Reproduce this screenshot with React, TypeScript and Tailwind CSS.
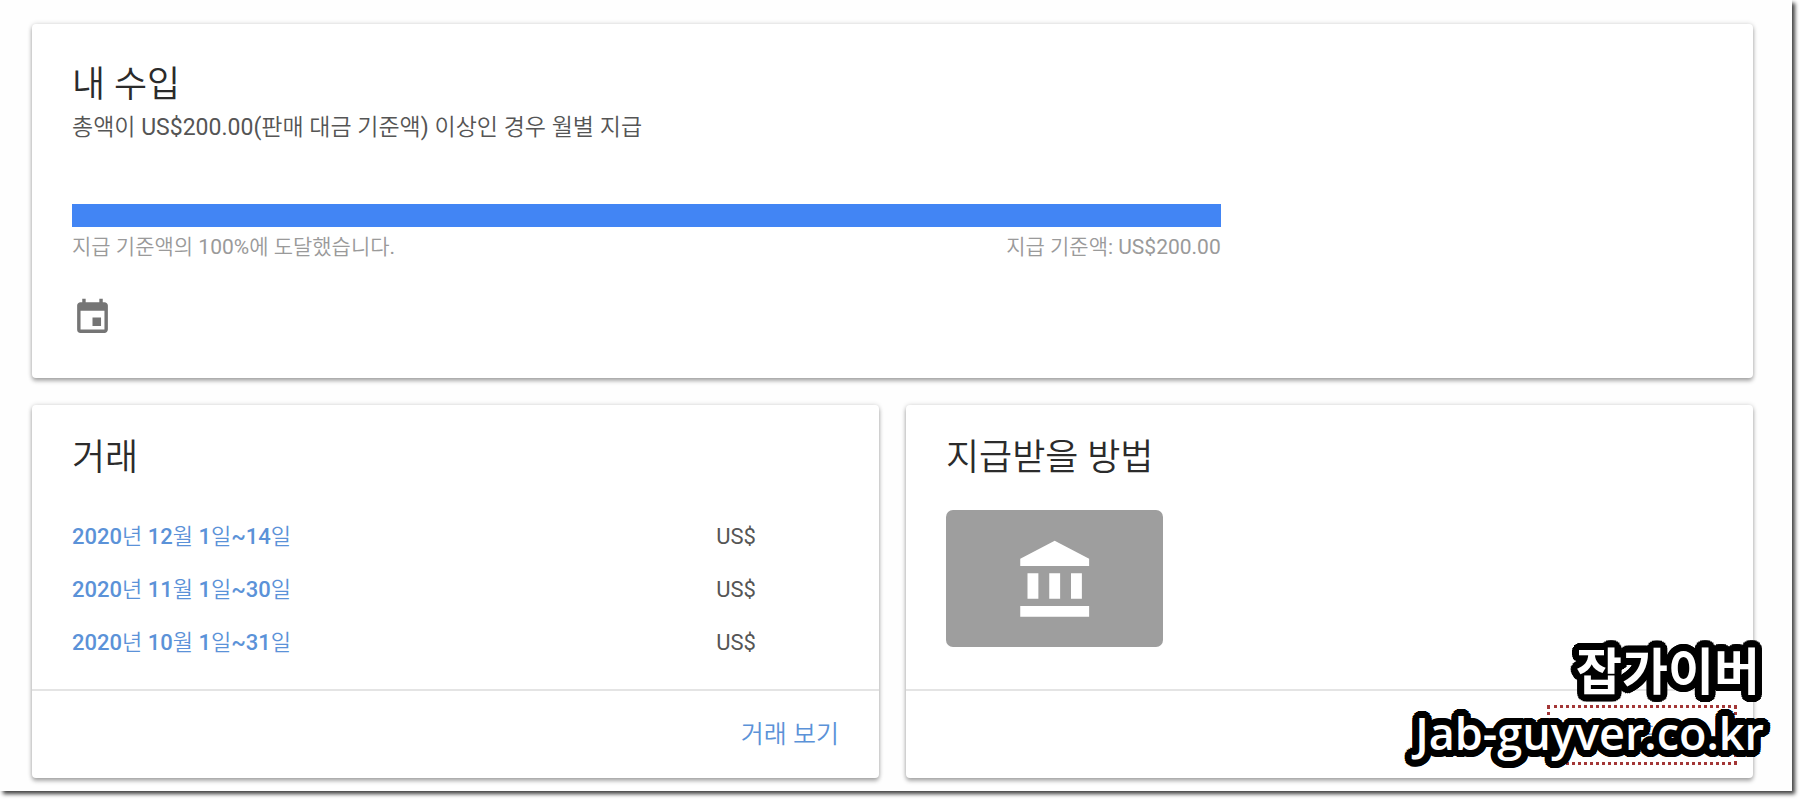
import type { ReactNode } from 'react';
import { MdEvent } from 'react-icons/md';

interface Transaction {
  period: string;
  amount: string;
}

const TRANSACTIONS: Transaction[] = [
  { period: '2020년 12월 1일~14일', amount: 'US$' },
  { period: '2020년 11월 1일~30일', amount: 'US$' },
  { period: '2020년 10월 1일~31일', amount: 'US$' },
];

const PROGRESS = 100;

// Round outline: copies of the text on two rings around it
const OUTLINE = [7, 4]
  .flatMap(radius =>
    Array.from({ length: 24 }, (_, i) => {
      const angle = (i * Math.PI) / 12;
      return `${(Math.cos(angle) * radius).toFixed(1)}px ${(Math.sin(angle) * radius).toFixed(1)}px 0 #000`;
    })
  )
  .join(', ');

function BankIcon() {
  return (
    <svg viewBox="0 0 24 24" fill="currentColor" aria-hidden="true" className="size-[87px] text-white">
      <path d="M4 10v7h3v-7H4zm6 0v7h3v-7h-3zM2 22h19v-3H2v3zm14-12v7h3v-7h-3zm-4.5-9L2 6v2h19V6l-9.5-5z" />
    </svg>
  );
}

function Card({ children }: { children: ReactNode }) {
  return (
    <section className="flex min-w-0 flex-1 flex-col rounded bg-white shadow-[0_3px_4px_rgba(0,0,0,0.3),0_0_5px_rgba(0,0,0,0.16)]">
      {children}
    </section>
  );
}

function CardTitle({ children }: { children: ReactNode }) {
  return <h2 className="text-4xl leading-[44px] font-[350] text-[#2b2b2b]">{children}</h2>;
}

function CardFooter({ children }: { children: ReactNode }) {
  return (
    <footer className="flex h-[89px] items-center justify-end border-t-2 border-[#e4e4e4] px-4 text-[#5b92d8]">
      {children}
    </footer>
  );
}

function Earnings() {
  return (
    <Card>
      <div className="px-10 pt-[39px] pb-[39px]">
        <CardTitle>내 수입</CardTitle>
        <p className="text-[23px] leading-[42px] text-[#555555]">
          총액이 US$200.00(판매 대금 기준액) 이상인 경우 월별 지급
        </p>
        <div className="mt-[55px] w-[70%]">
          <div
            role="progressbar"
            aria-label="지급 기준액"
            aria-valuenow={PROGRESS}
            className="h-[23px] bg-[#e0e0e0]"
          >
            <div className="h-full bg-[#4285f4]" style={{ width: `${PROGRESS}%` }} />
          </div>
          <div className="flex justify-between text-[21px] leading-10 text-[#9a9a9a]">
            <span>지급 기준액의 100%에 도달했습니다.</span>
            <span>지급 기준액: US$200.00</span>
          </div>
        </div>
        <MdEvent className="mt-[30px] size-[41px] text-[#757575]" />
      </div>
    </Card>
  );
}

function Transactions() {
  return (
    <Card>
      <div className="flex-1 px-10 pt-[31px]">
        <CardTitle>거래</CardTitle>
        <table className="mt-[30px] w-full table-fixed text-left text-[22px]">
          <tbody>
            {TRANSACTIONS.map(item => (
              <tr key={item.period} className="h-[53px]">
                <td className="w-[84%] p-0">
                  <a href="#" className="font-medium text-[#5b92d8]">
                    {item.period}
                  </a>
                </td>
                <td className="p-0 text-[#555555]">{item.amount}</td>
              </tr>
            ))}
          </tbody>
        </table>
      </div>
      <CardFooter>
        <a href="#" className="px-6 text-[25px] leading-8">
          거래 보기
        </a>
      </CardFooter>
    </Card>
  );
}

function PaymentMethod() {
  return (
    <Card>
      <div className="flex-1 px-10 pt-[31px]">
        <CardTitle>지급받을 방법</CardTitle>
        <div className="mt-[30px] mb-[42px] flex h-[137px] w-[217px] items-center justify-center rounded-[7px] bg-[#9e9e9e] pt-1 pl-1">
          <BankIcon />
        </div>
      </div>
      <CardFooter>
        <a href="#" className="border-3 border-dotted border-[#a33636] px-[26px] py-[11px] text-[22px] leading-8">
          결제 수단 관리
        </a>
      </CardFooter>
    </Card>
  );
}

function Watermark() {
  return (
    <div
      className="pointer-events-none absolute right-7 bottom-[26px] text-right font-['Open_Sans','Noto_Sans_CJK_KR',sans-serif] text-white"
      style={{ textShadow: OUTLINE }}
    >
      <p className="pr-1 text-[50px] leading-[60px] font-bold">잡가이버</p>
      <p className="text-[45px] leading-[64px] font-semibold">Jab-guyver.co.kr</p>
    </div>
  );
}

export default function App() {
  return (
    <div className="flex min-h-screen flex-col bg-white pr-2 pb-2 font-['Roboto','Noto_Sans_CJK_KR_DemiLight','Noto_Sans_CJK_KR',sans-serif]">
      <main className="relative flex flex-1 flex-col gap-[27px] bg-[#fefefe] pt-6 pr-[39px] pb-[13px] pl-8 shadow-[3px_3px_4px_rgba(0,0,0,0.75)]">
        <Earnings />
        <div className="flex gap-[27px]">
          <Transactions />
          <PaymentMethod />
        </div>
        <Watermark />
      </main>
    </div>
  );
}
